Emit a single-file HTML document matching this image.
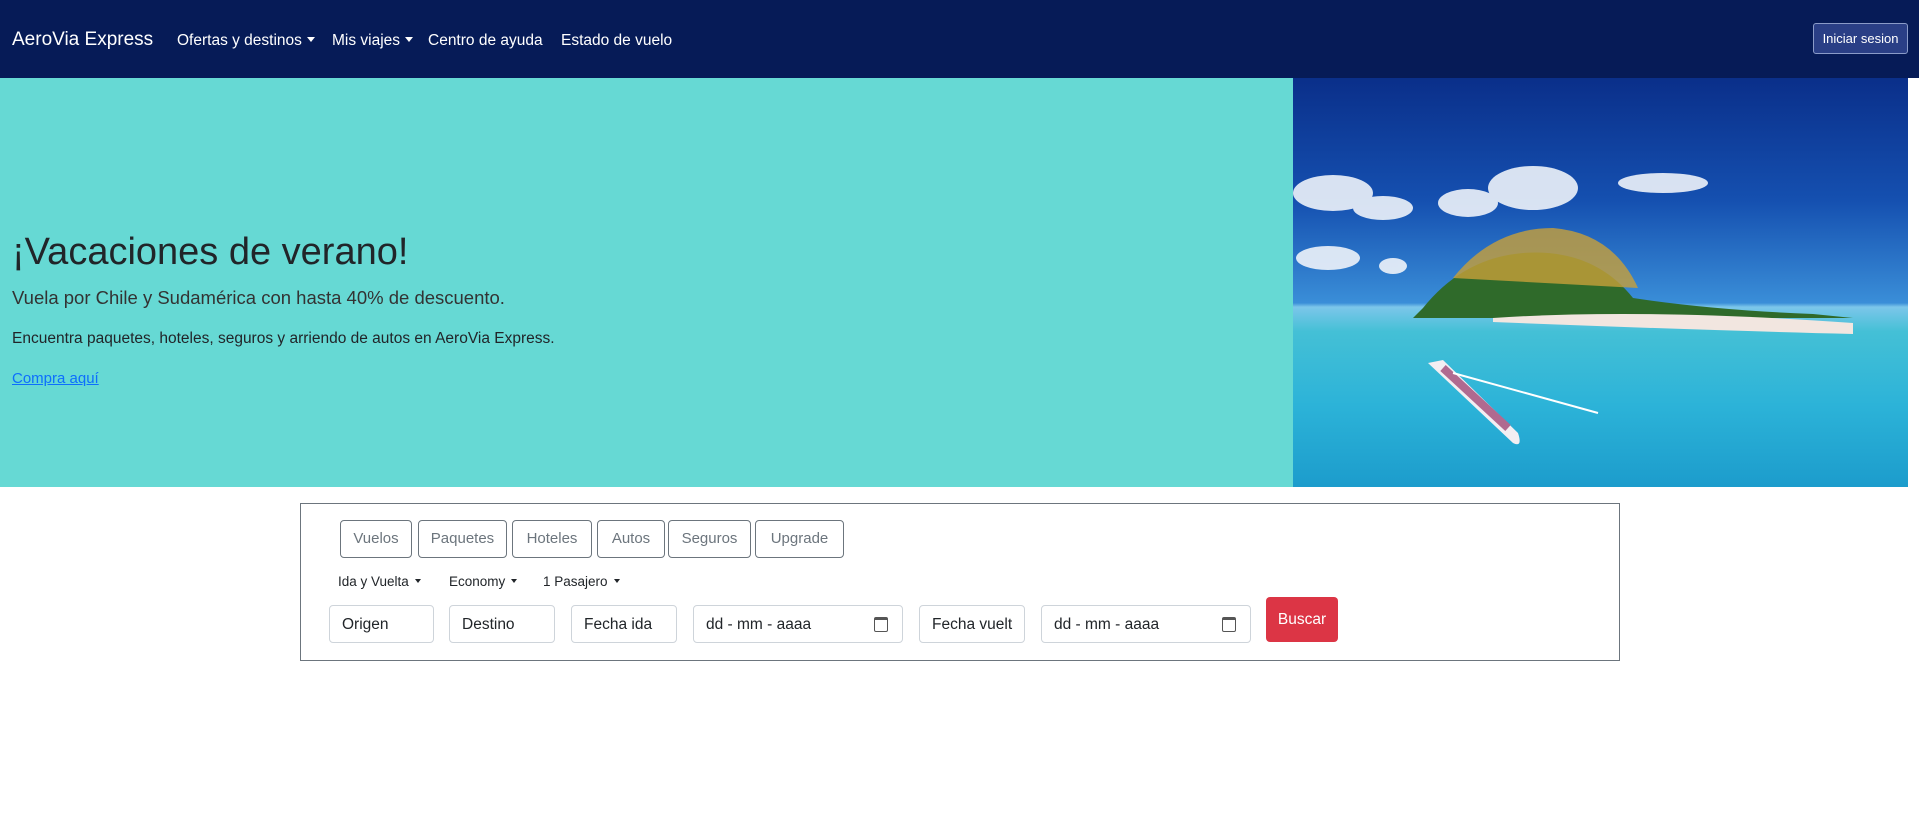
<!DOCTYPE html>
<html><head><meta charset="utf-8"><style>
*{box-sizing:border-box;margin:0;padding:0}
body{width:1919px;height:836px;background:#fff;font-family:"Liberation Sans",Arial,sans-serif;color:#212529;position:relative;overflow:hidden}
nav{position:absolute;left:0;top:0;width:1919px;height:78px;background:#061b57}
.brand{position:absolute;left:12px;top:29px;color:#fff;font-size:19px}
.nl{position:absolute;top:32px;color:#fff;font-size:15.5px}
.car:after{content:"";display:inline-block;margin-left:5px;vertical-align:3px;border-top:5px solid #fff;border-left:4px solid transparent;border-right:4px solid transparent}
.login{position:absolute;left:1813px;top:23px;width:95px;height:31px;border:1px solid #8a9bc8;background:#2a3f86;color:#fff;font-size:13px;border-radius:3px;text-align:center;line-height:29px}
.hero{position:absolute;left:0;top:78px;width:1293px;height:409px;background:#66d9d4}
h1{position:absolute;left:12px;top:231px;font-size:38px;font-weight:400}
.lead{position:absolute;left:12px;top:287px;font-size:18.5px;font-weight:300;color:#333}
.p1{position:absolute;left:12px;top:330px;font-size:15.5px}
.lnk{position:absolute;left:12px;top:370px;font-size:15px;color:#0d6efd;text-decoration:underline}
.img{position:absolute;left:1293px;top:78px;width:615px;height:409px;overflow:hidden;background:linear-gradient(#0a2f8a 0%,#1550b0 30%,#3a8ed8 55%,#7cc6ea 56%,#44c0d6 62%,#2cb3d8 80%,#1c9ccc 100%)}
.box{position:absolute;left:300px;top:503px;width:1320px;height:158px;border:1px solid #6c757d}
.tab{position:absolute;top:520px;height:38px;border:1px solid #6c757d;border-radius:4px;color:#6c757d;font-size:15px;line-height:36px;text-align:center}
.dd{position:absolute;top:574px;font-size:13.5px;color:#212529}
.dd:after{content:"";display:inline-block;margin-left:6px;vertical-align:3px;border-top:4px solid #212529;border-left:3.5px solid transparent;border-right:3.5px solid transparent}
.in{position:absolute;top:605px;height:38px;border:1px solid #ced4da;border-radius:4px;font-size:15.5px;line-height:38px;padding-left:12px;color:#212529;overflow:hidden;white-space:nowrap}
.cal{position:absolute;right:14px;top:11px;width:14px;height:15px;border:1.5px solid #555;border-top-width:3px;border-radius:2px}
.btn{position:absolute;left:1266px;top:597px;width:72px;height:45px;background:#dc3545;color:#fff;border-radius:4px;font-size:15.5px;text-align:center;line-height:45px}
</style></head><body>
<nav>
<div class="brand">AeroVia Express</div>
<div class="nl car" style="left:177px">Ofertas y destinos</div>
<div class="nl car" style="left:332px">Mis viajes</div>
<div class="nl" style="left:428px">Centro de ayuda</div>
<div class="nl" style="left:561px">Estado de vuelo</div>
<div class="login">Iniciar sesion</div>
</nav>
<div class="hero"></div>
<h1>¡Vacaciones de verano!</h1>
<div class="lead">Vuela por Chile y Sudamérica con hasta 40% de descuento.</div>
<div class="p1">Encuentra paquetes, hoteles, seguros y arriendo de autos en AeroVia Express.</div>
<div class="lnk">Compra aquí</div>
<div class="img">
<svg width="615" height="409" viewBox="0 0 615 409">
<g fill="#eef3fa" opacity=".9">
<ellipse cx="40" cy="115" rx="40" ry="18"/><ellipse cx="90" cy="130" rx="30" ry="12"/><ellipse cx="35" cy="180" rx="32" ry="12"/>
<ellipse cx="240" cy="110" rx="45" ry="22"/><ellipse cx="175" cy="125" rx="30" ry="14"/><ellipse cx="370" cy="105" rx="45" ry="10"/>
<ellipse cx="100" cy="188" rx="14" ry="8"/></g>
<path d="M130 230 Q170 180 230 175 Q300 170 340 220 Q420 232 520 236 L560 240 L120 240Z" fill="#2f6a2a"/>
<path d="M160 200 Q200 150 260 150 Q320 155 345 210" fill="#c8a03a" opacity=".8"/>
<path d="M200 240 Q350 230 560 245 L560 256 Q400 252 200 244Z" fill="#f2e6e0"/>
<path d="M135 285 L220 365 Q230 370 225 355 L150 282Z" fill="#f3eef2"/>
<path d="M150 290 L215 350" stroke="#b06a90" stroke-width="8"/>
<path d="M160 295 L305 335" stroke="#fff" stroke-width="2"/>
</svg>
</div>
<div class="box"></div>
<div class="tab" style="left:340px;width:72px">Vuelos</div>
<div class="tab" style="left:418px;width:89px">Paquetes</div>
<div class="tab" style="left:512px;width:80px">Hoteles</div>
<div class="tab" style="left:597px;width:68px">Autos</div>
<div class="tab" style="left:668px;width:83px">Seguros</div>
<div class="tab" style="left:755px;width:89px">Upgrade</div>
<div class="dd" style="left:338px">Ida y Vuelta</div>
<div class="dd" style="left:449px">Economy</div>
<div class="dd" style="left:543px">1 Pasajero</div>
<div class="in" style="left:329px;width:105px">Origen</div>
<div class="in" style="left:449px;width:106px">Destino</div>
<div class="in" style="left:571px;width:106px">Fecha ida</div>
<div class="in" style="left:693px;width:210px">dd - mm - aaaa<span class="cal"></span></div>
<div class="in" style="left:919px;width:106px">Fecha vuelt</div>
<div class="in" style="left:1041px;width:210px">dd - mm - aaaa<span class="cal"></span></div>
<div class="btn">Buscar</div>
</body></html>
